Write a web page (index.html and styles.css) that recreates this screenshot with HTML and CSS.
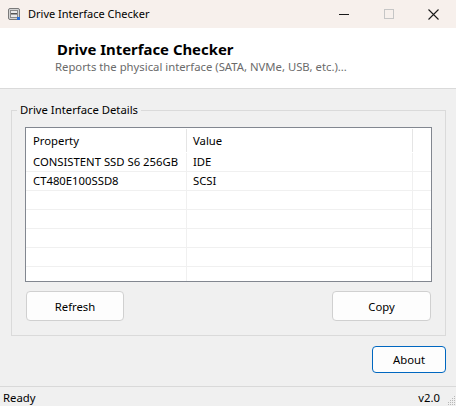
FILE: index.html
```html
<!DOCTYPE html>
<html>
<head>
<meta charset="utf-8">
<link rel="stylesheet" href="styles.css">
</head>
<body>
<div class="window">
  <div class="titlebar">
    <svg class="app-icon" width="12" height="12" viewBox="0 0 12 12">
      <rect x="0.5" y="0.5" width="11" height="11" rx="1.5" fill="#d4d4d4" stroke="#7a7a7a"/>
      <rect x="2.5" y="2.5" width="7" height="7" fill="#eaeaea" stroke="#8a8a8a"/>
      <rect x="3" y="5" width="6" height="1.5" fill="#555"/>
      <rect x="9" y="9" width="3" height="3" fill="#2a6fd6"/>
    </svg>
    <span class="title">Drive Interface Checker</span>
    <div class="controls">
      <span class="ctl"><svg width="10" height="10" viewBox="0 0 10 10"><line x1="0" y1="5.5" x2="10" y2="5.5" stroke="#1a1a1a" stroke-width="1"/></svg></span>
      <span class="ctl"><svg width="10" height="10" viewBox="0 0 10 10"><rect x="0.5" y="0.5" width="9" height="9" fill="none" stroke="#c6c6c6"/></svg></span>
      <span class="ctl"><svg width="11" height="11" viewBox="0 0 11 11"><path d="M0.5 0.5 L10.5 10.5 M10.5 0.5 L0.5 10.5" stroke="#1a1a1a" stroke-width="1.1"/></svg></span>
    </div>
  </div>
  <div class="header">
    <div class="h-title">Drive Interface Checker</div>
    <div class="h-sub">Reports the physical interface (SATA, NVMe, USB, etc.)...</div>
  </div>
  <div class="main">
    <div class="group">
      <span class="group-label">Drive Interface Details</span>
      <div class="list">
        <div class="lrow head">
          <div class="c c1">Property</div>
          <div class="c c2">Value</div>
          <div class="c c3"></div>
        </div>
        <div class="lrow"><div class="c c1">CONSISTENT SSD S6 256GB</div><div class="c c2">IDE</div><div class="c c3"></div></div>
        <div class="lrow"><div class="c c1">CT480E100SSD8</div><div class="c c2">SCSI</div><div class="c c3"></div></div>
        <div class="lrow"><div class="c c1"></div><div class="c c2"></div><div class="c c3"></div></div>
        <div class="lrow"><div class="c c1"></div><div class="c c2"></div><div class="c c3"></div></div>
        <div class="lrow"><div class="c c1"></div><div class="c c2"></div><div class="c c3"></div></div>
        <div class="lrow"><div class="c c1"></div><div class="c c2"></div><div class="c c3"></div></div>
        <div class="lrow last"><div class="c c1"></div><div class="c c2"></div><div class="c c3"></div></div>
      </div>
      <div class="btnrow">
        <button class="btn refresh">Refresh</button>
        <button class="btn copy">Copy</button>
      </div>
    </div>
    <div class="aboutrow">
      <button class="btn about">About</button>
    </div>
  </div>
  <div class="status">
    <span>Ready</span>
    <span class="ver">v2.0</span>
    <svg class="grip" width="8" height="12" viewBox="0 0 8 12">
      <g fill="#b8b8b8">
        <rect x="6" y="2" width="1" height="1"/>
        <rect x="4" y="4" width="1" height="1"/><rect x="6" y="4" width="1" height="1"/>
        <rect x="2" y="6" width="1" height="1"/><rect x="4" y="6" width="1" height="1"/><rect x="6" y="6" width="1" height="1"/>
        <rect x="0" y="8" width="1" height="1"/><rect x="2" y="8" width="1" height="1"/><rect x="4" y="8" width="1" height="1"/><rect x="6" y="8" width="1" height="1"/>
        <rect x="0" y="10" width="1" height="1"/><rect x="2" y="10" width="1" height="1"/><rect x="4" y="10" width="1" height="1"/><rect x="6" y="10" width="1" height="1"/>
      </g>
    </svg>
  </div>
</div>
</body>
</html>
```
FILE: styles.css
```css
* { box-sizing: border-box; }
html, body { margin: 0; padding: 0; }
body {
  width: 456px;
  height: 406px;
  overflow: hidden;
  font-family: "Noto Sans", "Open Sans", sans-serif;
  font-size: 11.3px;
  color: #000;
  background: #f0f0f0;
}
.window {
  width: 456px;
  height: 406px;
  display: flex;
  flex-direction: column;
}
.titlebar {
  height: 28px;
  background: #f7f0ec;
  display: flex;
  align-items: center;
  padding-left: 8px;
}
.app-icon { flex: none; }
.title {
  margin-left: 8px;
  font-size: 11px;
  line-height: 16px;
}
.controls {
  margin-left: auto;
  display: flex;
  align-items: center;
  height: 28px;
}
.ctl {
  width: 45px;
  height: 28px;
  display: flex;
  align-items: center;
  justify-content: center;
}
.ctl svg { display: block; }
.header {
  height: 61px;
  background: #fff;
  border-bottom: 1px solid #dadada;
  padding-left: 57px;
  padding-top: 12px;
}
.h-title {
  font-size: 14.9px;
  font-weight: 700;
  line-height: 19px;
}
.h-sub {
  font-size: 11.3px;
  line-height: 16px;
  color: #6b6b6b;
  margin-left: -2px;
}
.main {
  flex: 1;
  padding: 21px 10px 0 11px;
  display: flex;
  flex-direction: column;
}
.group {
  position: relative;
  border: 1px solid #dadada;
  padding: 16px 13px 14px 13px;
  height: 226px;
}
.group-label {
  position: absolute;
  left: 5px;
  top: -9px;
  padding: 0 3px;
  background: #f0f0f0;
  line-height: 16px;
}
.list {
  border: 1px solid #828790;
  background: #fff;
  height: 155px;
  overflow: hidden;
}
.lrow {
  display: flex;
  height: 19px;
  border-bottom: 1px solid #f0f0f0;
}
.lrow.head {
  height: 25px;
  border-bottom: none;
}
.c {
  line-height: 18px;
  padding-left: 7px;
  white-space: nowrap;
  overflow: hidden;
  border-right: 1px solid #f0f0f0;
}
.c1 { width: 161px; }
.c2 { width: 226px; padding-left: 6px; }
.c3 { flex: 1; border-right: none; }
.head .c {
  line-height: 25px;
  border-right: none;
  position: relative;
}
.head .c1::after, .head .c2::after {
  content: "";
  position: absolute;
  right: 0;
  top: 1px;
  height: 23px;
  width: 1px;
  background: #e5e5e5;
}
.btnrow {
  display: flex;
  justify-content: space-between;
  margin-top: 9px;
  padding-left: 1px;
  padding-right: 1px;
}
.btn {
  font-family: inherit;
  font-size: 11.3px;
  color: #000;
  background: #fdfdfd;
  border: 1px solid #d0d0d0;
  border-radius: 4px;
  padding: 0;
  height: 30px;
}
.refresh { width: 98px; }
.copy { width: 99px; }
.aboutrow {
  display: flex;
  justify-content: flex-end;
  margin-top: 10px;
}
.about {
  width: 74px;
  height: 27px;
  border-color: #0067c0;
}
.status {
  height: 20px;
  border-top: 1px solid #d9d9d9;
  display: flex;
  align-items: center;
  padding-left: 3px;
  padding-top: 2px;
  line-height: 16px;
}
.ver { margin-left: auto; margin-right: 8px; }
.grip { flex: none; margin-top: 4px; }
```
